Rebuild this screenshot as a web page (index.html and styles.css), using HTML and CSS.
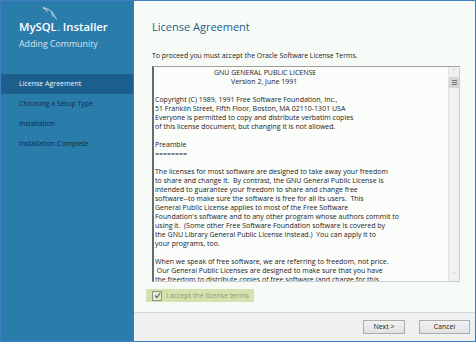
FILE: index.html
```html
<!DOCTYPE html>
<html lang="en">
<head>
    <meta charset="UTF-8">
    <title>MySQL Installer</title>
    <link rel="stylesheet" href="styles.css">
</head>
<body>

<div class="window">
    <div class="sidebar">
        <div class="brand">
            <svg class="dolphin" width="18" height="16" viewBox="0 0 18 16">
                <path d="M1.5 1.5 L3 2.5 L3.5 0.8 M3 2.5 Q8 2.5 11 6 Q13 8.5 15.5 13.5 M11 6 Q10.5 9 12.5 11 M5 3 Q4.5 5 6.5 6" fill="none" stroke="#e8f2f8" stroke-width="0.8"/>
            </svg>
            <div class="product">MySQL<span class="dot">.</span> Installer</div>
            <div class="subtitle">Adding Community</div>
        </div>
        <ul class="steps">
            <li class="active">License Agreement</li>
            <li>Choosing a Setup Type</li>
            <li>Installation</li>
            <li>Installation Complete</li>
        </ul>
    </div>

    <div class="main">
        <div class="content">
            <h1>License Agreement</h1>
            <p class="intro">To proceed you must accept the Oracle Software License Terms.</p>

            <div class="license">
                <div class="license-text">
                    <div class="center1">GNU GENERAL PUBLIC LICENSE</div>
                    <div class="center2">Version 2, June 1991</div>
                    <div>&nbsp;</div>
                    <div>Copyright (C) 1989, 1991 Free Software Foundation, Inc.,</div>
                    <div>51 Franklin Street, Fifth Floor, Boston, MA 02110-1301 USA</div>
                    <div>Everyone is permitted to copy and distribute verbatim copies</div>
                    <div>of this license document, but changing it is not allowed.</div>
                    <div>&nbsp;</div>
                    <div>Preamble</div>
                    <div>========</div>
                    <div>&nbsp;</div>
                    <div>The licenses for most software are designed to take away your freedom</div>
                    <div>to share and change it.  By contrast, the GNU General Public License is</div>
                    <div>intended to guarantee your freedom to share and change free</div>
                    <div>software--to make sure the software is free for all its users.  This</div>
                    <div>General Public License applies to most of the Free Software</div>
                    <div>Foundation's software and to any other program whose authors commit to</div>
                    <div>using it.  (Some other Free Software Foundation software is covered by</div>
                    <div>the GNU Library General Public License instead.)  You can apply it to</div>
                    <div>your programs, too.</div>
                    <div>&nbsp;</div>
                    <div>When we speak of free software, we are referring to freedom, not price.</div>
                    <div> Our General Public Licenses are designed to make sure that you have</div>
                    <div>the freedom to distribute copies of free software (and charge for this</div>
                    <div>service if you wish), that you receive source code or can get it</div>
                </div>
                <div class="scrollbar">
                    <div class="arrow">&#708;</div>
                    <div class="thumb"><span></span><span></span><span></span></div>
                    <div class="track"></div>
                    <div class="arrow">&#709;</div>
                </div>
            </div>

            <label class="accept">
                <span class="checkbox">
                    <svg width="7" height="7" viewBox="0 0 7 7"><path d="M1 3.5 L3 5.5 L6.2 1" fill="none" stroke="#5a6a50" stroke-width="1.2"/></svg>
                </span>
                I accept the license terms
            </label>
        </div>

        <div class="footer">
            <button class="btn next">Next &gt;</button>
            <button class="btn cancel">Cancel</button>
        </div>
    </div>
</div>

</body>
</html>
```

FILE: styles.css
```css
body {
    margin: 0;
    font-family: "Open Sans", "Noto Sans", sans-serif;
    background-color: #ffffff;
}
.window {
    width: 476px;
    height: 342px;
    box-sizing: border-box;
    border: 1px solid #3f7cc2;
    display: flex;
}
.sidebar {
    width: 132px;
    background-color: #2a7cab;
    border-right: 1px solid #2f82b2;
}
.brand {
    position: relative;
    padding: 19px 0 0 18px;
    height: 53px;
    box-sizing: border-box;
}
.dolphin {
    position: absolute;
    left: 40px;
    top: 5px;
}
.product {
    color: #ffffff;
    font-size: 11.3px;
    font-weight: 600;
    line-height: 14px;
}
.dot {
    font-size: 8px;
    margin-left: 1px;
}
.subtitle {
    color: #d3e6f2;
    font-size: 8.8px;
    line-height: 12px;
    margin-top: 3px;
}
.steps {
    list-style: none;
    margin: 20px 0 0;
    padding: 0;
}
.steps li {
    height: 20px;
    line-height: 20px;
    padding-left: 18px;
    font-size: 7px;
    color: #0e2c44;
}
.steps li.active {
    background-color: #1c5f8d;
    color: #eef6fb;
}
.main {
    flex: 1;
    display: flex;
    flex-direction: column;
    background-color: #f6fbf7;
}
.content {
    flex: 1;
    padding: 17px 15px 0 18px;
}
h1 {
    margin: 0;
    font-size: 11px;
    font-weight: 400;
    color: #1f5d8a;
    line-height: 18px;
}
.intro {
    margin: 15px 0 0;
    font-size: 6.9px;
    line-height: 10px;
    color: #1a1a1a;
}
.license {
    margin-top: 5px;
    height: 216px;
    box-sizing: border-box;
    display: flex;
    background-color: #fbfdfb;
    border-top: 1px solid #a0a0a0;
    border-left: 2px solid #6a6a6a;
    border-right: 1px solid #cfcfcf;
    border-bottom: 1px solid #cfcfcf;
}
.license-text {
    flex: 1;
    overflow: hidden;
    padding: 1px 0 0 1px;
    font-size: 7px;
    line-height: 9px;
    color: #222222;
}
.license-text div {
    white-space: pre;
}
.center1 {
    padding-left: 59px;
}
.center2 {
    padding-left: 76px;
}
.scrollbar {
    width: 10px;
    display: flex;
    flex-direction: column;
    background-color: #f0f0f0;
    border-left: 1px solid #e2e2e2;
}
.arrow {
    height: 10px;
    font-size: 7px;
    line-height: 10px;
    text-align: center;
    color: #777777;
}
.thumb {
    height: 11px;
    background-color: #d6d6d6;
    display: flex;
    flex-direction: column;
    justify-content: center;
    align-items: center;
    gap: 1px;
}
.thumb span {
    width: 5px;
    height: 1px;
    background-color: #777777;
}
.track {
    flex: 1;
}
.accept {
    display: flex;
    align-items: center;
    width: 108px;
    height: 13px;
    margin: 7px 0 0 -6px;
    padding-left: 6px;
    box-sizing: border-box;
    background-color: #d3e2ae;
    font-size: 7px;
    color: #8a9c7c;
    white-space: nowrap;
}
.checkbox {
    width: 8px;
    height: 8px;
    border: 1px solid #8a9680;
    background-color: #e4ecd8;
    margin-right: 4px;
    display: flex;
    align-items: center;
    justify-content: center;
}
.footer {
    height: 29px;
    box-sizing: border-box;
    border-top: 1px solid #d6d6d6;
    background-color: #f0f0f0;
    display: flex;
    justify-content: flex-end;
    align-items: center;
    gap: 14px;
    padding: 0 5px 1px 0;
}
.btn {
    height: 14px;
    padding: 0;
    border: 1px solid #acacac;
    background: linear-gradient(#f2f2f2, #e2e2e2);
    font-family: "Open Sans", "Noto Sans", sans-serif;
    font-size: 7px;
    line-height: 12px;
    color: #1a1a1a;
}
.next {
    width: 42px;
}
.cancel {
    width: 51px;
}
```
